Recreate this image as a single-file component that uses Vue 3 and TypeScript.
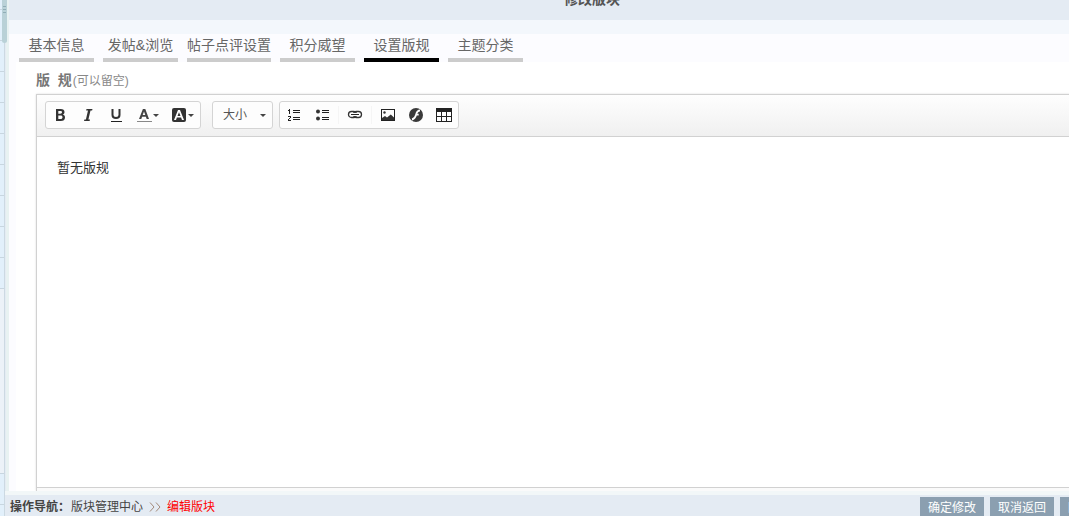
<script setup lang="ts">
import { ref } from 'vue'

interface Tab {
  id: string
  label: string
}

const tabs: Tab[] = [
  { id: 'base', label: '基本信息' },
  { id: 'post', label: '发帖&浏览' },
  { id: 'comment', label: '帖子点评设置' },
  { id: 'score', label: '积分威望' },
  { id: 'rules', label: '设置版规' },
  { id: 'category', label: '主题分类' },
]
const active = ref('rules')
const size = ref('大小')
const actions: string[] = ['确定修改', '取消返回', '回到顶部']
</script>

<template>
  <div class="page">
    <aside class="side">
      <div class="cells cells-top"></div>
      <div class="cells-gap"></div>
      <div class="cells cells-bottom"></div>
      <div class="thumb"><i></i><i></i><i></i></div>
    </aside>
    <div class="shell">
      <header class="title"><h1>修改版块</h1></header>
      <main class="main">
        <nav class="tabs">
          <button
            v-for="tab in tabs"
            :key="tab.id"
            type="button"
            class="tab"
            :class="{ active: tab.id === active }"
            @click="active = tab.id"
          >{{ tab.label }}</button>
        </nav>
        <section class="panel">
          <h2 class="legend">版&nbsp; 规<small>(可以留空)</small></h2>
          <div class="editor">
            <div class="toolbar">
              <div class="group">
                <button type="button" class="tool" aria-label="粗体">
                  <svg width="16" height="16" viewBox="0 0 16 16"><path fill="#333" fill-rule="evenodd" d="M4 2h4.6c2.6 0 3.9 1 3.9 3 0 1.4-.7 2.3-1.7 2.6 1.4.4 2.2 1.3 2.2 2.8 0 2.3-1.6 3.6-4.2 3.6H4zM6.3 4v2.7h2c1.1 0 1.7-.5 1.7-1.4S9.500 4 8.400 4zm0 4.500v3.500h2.300c1.200 0 1.900-.6 1.900-1.800s-.7-1.700-1.900-1.700z" /></svg>
                </button>
                <button type="button" class="tool" aria-label="斜体">
                  <svg width="16" height="16" viewBox="0 0 16 16"><path fill="#333" d="M6.500 2h6l-.4 1.500h-1.600L8.400 12.500H10L9.600 14H4l.4-1.500h1.500L8 3.500H6.100z" /></svg>
                </button>
                <button type="button" class="tool" aria-label="下划线">
                  <svg width="16" height="16" viewBox="0 0 16 16"><path fill="none" stroke="#333" stroke-width="2" d="M4.500 2v6c0 2.200 1.200 3 3.500 3s3.500-.8 3.500-3V2" /><path fill="#222" d="M3 14h11v1H3z" /></svg>
                </button>
                <button type="button" class="tool drop" aria-label="文字颜色">
                  <svg width="24" height="16" viewBox="0 0 24 16"><path fill="#444" fill-rule="evenodd" d="M6.900 2h2.400l3.700 10h-2.300l-.8-2.300H6.100L5.300 12H3zM8 4.400 6.700 8.100h2.600z" /><path fill="#888" d="M1 14h15v1H1z" /><path fill="#444" d="M17 7h6l-3 3z" /></svg>
                </button>
                <button type="button" class="tool drop" aria-label="背景颜色">
                  <svg width="24" height="16" viewBox="0 0 24 16"><rect x="1" y="1" width="14" height="14" rx="2" fill="#333" /><path fill="#fff" fill-rule="evenodd" d="M7 3h2l4 10h-2l-.9-2.400H5.900L5 13H3zM8 5.200 6.500 9.100h3z" /><path fill="#444" d="M17 7h6l-3 3z" /></svg>
                </button>
              </div>
              <div class="group size">
                <select v-model="size" aria-label="大小"><option>大小</option></select>
                <svg class="caret" width="6" height="3" viewBox="0 0 6 3"><path fill="#444" d="M0 0h6L3 3z" /></svg>
              </div>
              <div class="group">
                <button type="button" class="tool" aria-label="编号列表">
                  <svg width="16" height="16" viewBox="0 0 16 16" shape-rendering="crispEdges"><path fill="#222" d="M3 2h1v5H3zM2 3h1v1H2zM2 9h3v1H2zM4 10h1v1H4zM3 11h1v1H3zM2 12h1v1H2zM2 13h3v1H2zM7 3h7v1H7zM7 5h7v1H7zM7 10h7v1H7zM7 12h7v1H7z" /></svg>
                </button>
                <button type="button" class="tool" aria-label="项目列表">
                  <svg width="16" height="16" viewBox="0 0 16 16"><circle cx="4" cy="4.500" r="2" fill="#333" /><circle cx="4" cy="11.500" r="2" fill="#333" /><path fill="#222" d="M8 3h7v1H8zM8 5h7v1H8zM8 10h7v1H8zM8 12h7v1H8z" /></svg>
                </button>
                <span class="sep"></span>
                <button type="button" class="tool" aria-label="链接">
                  <svg width="16" height="16" viewBox="0 0 16 16" fill="none" stroke="#333"><rect x="1.500" y="4.500" width="8" height="6" rx="3" stroke-width="1.300" /><rect x="6.500" y="4.500" width="8" height="6" rx="3" stroke-width="1.300" /><path stroke="#fdfdfd" stroke-width="3" d="M5 7.500h6" /><path stroke="#222" stroke-width="1" d="M4 7.500h8" /></svg>
                </button>
                <span class="sep"></span>
                <button type="button" class="tool" aria-label="图片">
                  <svg width="16" height="16" viewBox="0 0 16 16"><path fill="#222" fill-rule="evenodd" d="M1 2h14v12H1zM2 3v10h12V3z" /><circle cx="4.500" cy="5.500" r="1.200" fill="#333" /><path fill="#333" d="M2 13v-2l3-2 2 1.500L10.800 7.500 14 10.500V13z" /></svg>
                </button>
                <button type="button" class="tool" aria-label="动画">
                  <svg width="16" height="16" viewBox="0 0 16 16"><circle cx="8" cy="8" r="7" fill="#3a3a3a" /><path fill="none" stroke="#fff" stroke-width="1.800" d="M12 3.500c-3 0-3.400 2.400-4 4.500s-1.200 4-4 4.500M7.500 7.600h3.200" /></svg>
                </button>
                <button type="button" class="tool" aria-label="表格">
                  <svg width="16" height="16" viewBox="0 0 16 16" shape-rendering="crispEdges"><path fill="#222" fill-rule="evenodd" d="M0 1h16v14H0zM1 5v4h4V5zM6 5v4h4V5zM11 5v4h4V5zM1 10v4h4v-4zM6 10v4h4v-4zM11 10v4h4v-4z" /></svg>
                </button>
              </div>
            </div>
            <div class="content" contenteditable="true" role="textbox" aria-label="版规">暂无版规</div>
            <div class="status"></div>
          </div>
        </section>
      </main>
    </div>
    <footer class="footer">
      <nav class="crumbs">
        <b>操作导航：</b>
        <a href="#">版块管理中心</a>
        <svg width="12" height="10" viewBox="0 0 12 10"><path fill="none" stroke="#a3897a" d="M1 0.500 5 5 1 9.500M7 0.500 11 5 7 9.500" /></svg>
        <a href="#" class="current">编辑版块</a>
      </nav>
      <div class="actions">
        <button v-for="action in actions" :key="action" type="button">{{ action }}</button>
      </div>
    </footer>
  </div>
</template>

<style>
html,
body {
  overflow: hidden;
}
</style>

<style scoped>
.page {
  box-sizing: border-box;
  height: 100vh;
  overflow: hidden;
  display: grid;
  grid-template-columns: 9px 1fr;
  grid-template-rows: 1fr 25px;
  background: #e4ebf3;
  color: #555;
  font: 12px/16px "Liberation Sans", "Noto Sans CJK SC", sans-serif;
}
button,
select {
  font: inherit;
  color: inherit;
  border: 0;
  background: none;
  padding: 0;
  margin: 0;
}
a {
  color: inherit;
  text-decoration: none;
}
.side {
  grid-row: 1 / 3;
  grid-column: 1;
  position: relative;
  box-sizing: border-box;
  display: flex;
  flex-direction: column;
  padding-right: 5px;
  background: linear-gradient(to right, #ccd9e2 0 5px, #e4ebf3 5px 6px, #e8f2f2 6px);
}
.cells {
  background: repeating-linear-gradient(to bottom, #e2f0fb 0 30px, #c8d6e0 30px 31px);
}
.cells-top {
  height: 289px;
  background-position: 0 -21px;
  background-size: 100% 31px;
}
.cells-gap {
  flex: 1;
  background: #ecf2f8;
}
.cells-bottom {
  height: 43px;
  border-top: 1px solid #c8d6e0;
  box-sizing: border-box;
}
.thumb {
  position: absolute;
  top: 0;
  left: 2px;
  box-sizing: border-box;
  width: 5px;
  height: 43px;
  padding-top: 6px;
  border-radius: 0 0 3px 3px;
  background: #b9d1d7;
}
.thumb i {
  display: block;
  height: 1px;
  margin: 0 1px 2px;
  background: #8fadb6;
}
.shell {
  grid-row: 1;
  grid-column: 2;
  margin-right: -106px;
  min-height: 0;
  display: flex;
  flex-direction: column;
  background: #fcfcff;
}
.title {
  height: 20px;
  flex: none;
  overflow: hidden;
  background: #e4ebf3;
  border-bottom: 14px solid #f3f7fc;
}
.title h1 {
  margin: -10px 0 0;
  font-size: 14px;
  line-height: 18px;
  text-align: center;
}
.main {
  flex: 1;
  min-height: 0;
  display: flex;
  flex-direction: column;
}
.tabs {
  display: flex;
  gap: 9px;
  padding-left: 10px;
}
.tab {
  box-sizing: border-box;
  min-width: 75px;
  height: 28px;
  padding-bottom: 2px;
  border-bottom: 4px solid #ccc;
  font-size: 14px;
  line-height: 22px;
  color: #666;
  white-space: nowrap;
}
.tab.active {
  border-color: #000;
}
.panel {
  flex: 1;
  min-height: 0;
  display: flex;
  flex-direction: column;
  margin-left: 7px;
  padding: 8px 0 0 20px;
  background: #fff;
}
.legend {
  margin: 0 0 4px;
  font-size: 14px;
  line-height: 20px;
  color: #777;
}
.legend small {
  margin-left: 1px;
  font-size: 12px;
  font-weight: normal;
  color: #888;
}
.editor {
  flex: 1;
  min-height: 0;
  display: flex;
  flex-direction: column;
  border: 1px solid #d1d1d1;
  border-bottom: 0;
  box-shadow: 0 0 2px #ddd;
}
.legend + .editor {
  margin-top: -1px;
}
.toolbar {
  display: flex;
  padding: 6px 8px 7px;
  border-bottom: 1px solid #d1d1d1;
  background: linear-gradient(#fefefe, #f0f0f0);
}
.group {
  display: flex;
  align-items: center;
  box-sizing: border-box;
  height: 28px;
  border: 1px solid #d4d4d4;
  border-radius: 3px;
  background: #fdfdfd;
  margin-right: 6px;
}
.group:first-child {
  margin-right: 11px;
}
.tool {
  width: 28px;
  height: 26px;
  display: grid;
  place-items: center;
}
.tool.drop {
  width: 35px;
}
.sep {
  width: 1px;
  height: 18px;
  margin: 0 2px;
  background: #f5f5f5;
}
.size {
  position: relative;
  width: 61px;
}
.size select {
  appearance: none;
  width: 100%;
  height: 26px;
  padding-left: 10px;
}
.caret {
  position: absolute;
  right: 6px;
  top: 12px;
}
.content {
  flex: 1;
  min-height: 0;
  padding: 20px;
  color: #333;
  font-size: 13px;
  line-height: 21px;
}
.status {
  height: 3px;
  border-top: 1px solid #d1d1d1;
  background: #fafafa;
}
.footer {
  grid-row: 2;
  grid-column: 1 / 3;
  position: relative;
  display: flex;
  justify-content: space-between;
  margin: 0 -55px 0 5px;
  border-top: 4px solid #f2f7f8;
  background: #e4ebf3;
}
.crumbs {
  display: flex;
  align-items: center;
  padding: 2px 0 0 5px;
  color: #444;
}
.crumbs b {
  margin-right: 1px;
}
.crumbs svg {
  margin: 0 6px;
}
.crumbs .current {
  color: #f00;
}
.actions {
  display: flex;
  gap: 6px;
  padding-top: 2px;
}
.actions button {
  width: 64px;
  height: 20px;
  padding-top: 1px;
  background: #8b9fb0;
  color: #fff;
}
</style>
